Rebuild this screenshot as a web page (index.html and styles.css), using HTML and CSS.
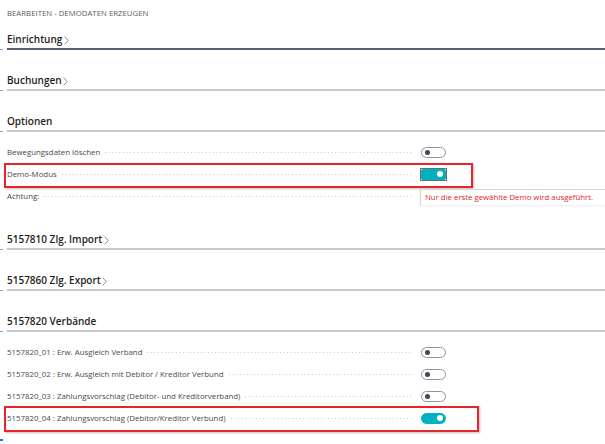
FILE: index.html
```html
<!DOCTYPE html>
<html lang="de">
<head>
<meta charset="utf-8">
<link rel="stylesheet" href="styles.css">
</head>
<body>
<div class="page">
  <div class="title">BEARBEITEN - DEMODATEN ERZEUGEN</div>

  <section class="section">
    <h2 class="head head-active">Einrichtung<svg class="chev" width="5" height="9" viewBox="0 0 5 9"><path d="M0.6 0.6 L4.2 4.5 L0.6 8.4" fill="none" stroke="#808080" stroke-width="0.9"/></svg></h2>
  </section>

  <section class="section">
    <h2 class="head">Buchungen<svg class="chev" width="5" height="9" viewBox="0 0 5 9"><path d="M0.6 0.6 L4.2 4.5 L0.6 8.4" fill="none" stroke="#808080" stroke-width="0.9"/></svg></h2>
  </section>

  <section class="section open">
    <h2 class="head">Optionen</h2>
    <div class="rows">
      <div class="row">
        <div class="field"><span class="label">Bewegungsdaten löschen</span><span class="leader"></span></div>
        <div class="value"><span class="toggle"><span class="knob"></span></span></div>
      </div>
      <div class="row marked marked-a">
        <div class="field"><span class="label">Demo-Modus</span><span class="leader"></span></div>
        <div class="value"><span class="focus"><span class="toggle on"><span class="knob"></span></span></span></div>
      </div>
      <div class="row">
        <div class="field"><span class="label">Achtung:</span><span class="leader"></span></div>
        <div class="value"><div class="tip">Nur die erste gewählte Demo wird ausgeführt.</div></div>
      </div>
    </div>
  </section>

  <section class="section">
    <h2 class="head">5157810 Zlg. Import<svg class="chev" width="5" height="9" viewBox="0 0 5 9"><path d="M0.6 0.6 L4.2 4.5 L0.6 8.4" fill="none" stroke="#808080" stroke-width="0.9"/></svg></h2>
  </section>

  <section class="section">
    <h2 class="head">5157860 Zlg. Export<svg class="chev" width="5" height="9" viewBox="0 0 5 9"><path d="M0.6 0.6 L4.2 4.5 L0.6 8.4" fill="none" stroke="#808080" stroke-width="0.9"/></svg></h2>
  </section>

  <section class="section open">
    <h2 class="head">5157820 Verbände</h2>
    <div class="rows">
      <div class="row">
        <div class="field"><span class="label">5157820_01 : Erw. Ausgleich Verband</span><span class="leader"></span></div>
        <div class="value"><span class="toggle"><span class="knob"></span></span></div>
      </div>
      <div class="row">
        <div class="field"><span class="label">5157820_02 : Erw. Ausgleich mit Debitor / Kreditor Verbund</span><span class="leader"></span></div>
        <div class="value"><span class="toggle"><span class="knob"></span></span></div>
      </div>
      <div class="row">
        <div class="field"><span class="label">5157820_03 : Zahlungsvorschlag (Debitor- und Kreditorverband)</span><span class="leader"></span></div>
        <div class="value"><span class="toggle"><span class="knob"></span></span></div>
      </div>
      <div class="row marked marked-b">
        <div class="field"><span class="label">5157820_04 : Zahlungsvorschlag (Debitor/Kreditor Verbund)</span><span class="leader"></span></div>
        <div class="value"><span class="toggle on"><span class="knob"></span></span></div>
      </div>
    </div>
  </section>
  <div class="corner"></div>
</div>
</body>
</html>
```

FILE: styles.css
```css
* { box-sizing: border-box; }
html, body { margin: 0; padding: 0; background: #fff; }
body {
  font-family: "Open Sans", "Noto Sans", "Liberation Sans", sans-serif;
  color: #222;
  width: 605px;
  height: 444px;
  overflow: hidden;
}
.page {
  padding: 7px 0 0 7px;
  position: relative;
  height: 444px;
}
.title {
  font-size: 7.8px;
  line-height: 12px;
  color: #5c5c5c;
}
.section {
  margin-top: 12px;
}
.section + .section { margin-top: 22px; }
.section.open + .section { margin-top: 24px; }
.head {
  position: relative;
  margin: 0;
  font-size: 10px;
  font-weight: 600;
  line-height: 17px;
  color: #1e1e1e;
  border-bottom: 2px solid #c8c8c8;
  display: flex;
  align-items: center;
  gap: 1.5px;
}
.head::before {
  content: "";
  position: absolute;
  left: -7px;
  bottom: -2px;
  width: 3px;
  height: 1px;
  background: #9aa0a8;
}
.head-active { border-bottom-color: #56606f; }
.chev { display: block; margin-top: 1px; }
.rows {
  padding-top: 9px;
}
.row {
  position: relative;
  display: flex;
  align-items: center;
  height: 22px;
}
.field {
  width: 414px;
  display: flex;
  align-items: center;
  padding-right: 8px;
}
.label {
  font-size: 7.85px;
  color: #4a4a4a;
  white-space: nowrap;
  line-height: 12px;
}
.leader {
  flex: 1;
  height: 1px;
  margin-left: 5px;
  margin-top: 1px;
  background-image: linear-gradient(to right, #c4c4c4 1px, transparent 1px);
  background-size: 3.6px 1px;
}
.value {
  flex: 1;
  display: flex;
  align-items: center;
  height: 22px;
}
.toggle {
  display: block;
  width: 25px;
  height: 11px;
  border: 1px solid #8e949c;
  border-radius: 6px;
  position: relative;
  background: #fff;
}
.knob {
  position: absolute;
  top: 2px;
  left: 3px;
  width: 5px;
  height: 5px;
  border-radius: 50%;
  background: #3e4757;
}
.toggle.on {
  background: #00b2bf;
  border-color: #00b2bf;
}
.toggle.on .knob {
  left: auto;
  right: 2px;
  top: 1.5px;
  width: 6px;
  height: 6px;
  background: #fff;
}
.focus {
  display: block;
  border: 1px solid #6d6d6d;
  margin-left: -1px;
}
.focus .toggle { border-radius: 2px; }
.tip {
  margin-top: 1px;
  margin-left: -1px;
  width: 185px;
  height: 16px;
  border-left: 1px solid #d6d6d6;
  border-top: 1px solid #d6d6d6;
  box-shadow: 0 1px 2px rgba(0,0,0,0.08);
  font-size: 7.8px;
  line-height: 14px;
  color: #e0242b;
  padding-left: 4px;
  white-space: nowrap;
}
.marked::after {
  content: "";
  position: absolute;
  left: -3px;
  top: 0;
  border: 2px solid #e8232b;
  box-shadow: 1px 1px 2px rgba(0,0,0,0.25);
  pointer-events: none;
}
.marked-a::after { width: 465px; height: 21px; }
.marked-b::after { width: 471px; height: 22px; top: -1px; }
.corner {
  position: absolute;
  left: 0;
  bottom: 3px;
  width: 3px;
  height: 2px;
  background: #2a6fd0;
}
```
